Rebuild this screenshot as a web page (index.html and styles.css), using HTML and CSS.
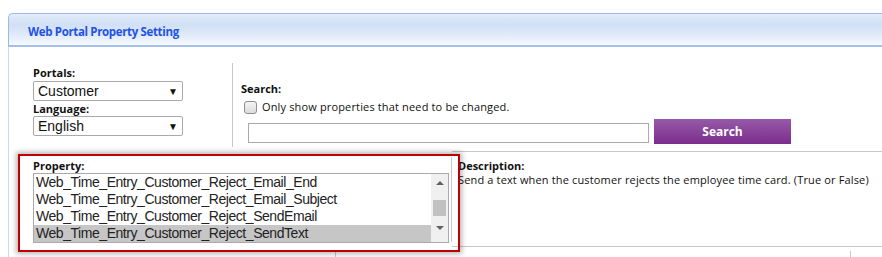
FILE: index.html
```html
<!DOCTYPE html>
<html>
<head>
<meta charset="utf-8">
<link rel="stylesheet" href="styles.css">
</head>
<body>
<div class="panel">
  <div class="panel-head">Web Portal Property Setting</div>
  <div class="panel-body">
    <div class="row-top">
      <div class="cell-portal">
        <div class="lbl">Portals:</div>
        <div class="dropdown"><span>Customer</span><span class="caret">&#9660;</span></div>
        <div class="lbl">Language:</div>
        <div class="dropdown"><span>English</span><span class="caret">&#9660;</span></div>
      </div>
      <div class="cell-search">
        <div class="lbl search-lbl">Search:</div>
        <label class="chk-row"><span class="chk"></span><span>Only show properties that need to be changed.</span></label>
        <div class="search-line">
          <div class="search-input"></div>
          <div class="search-btn">Search</div>
        </div>
      </div>
    </div>
    <div class="row-mid">
      <div class="cell-prop">
        <div class="prop-inner">
          <div class="lbl">Property:</div>
          <div class="listbox">
            <div class="items">
              <div class="item">Web_Time_Entry_Customer_Reject_Email_End</div>
              <div class="item">Web_Time_Entry_Customer_Reject_Email_Subject</div>
              <div class="item">Web_Time_Entry_Customer_Reject_SendEmail</div>
              <div class="item selected">Web_Time_Entry_Customer_Reject_SendText</div>
            </div>
            <div class="scrollbar">
              <span class="arrow up"></span>
              <span class="thumb"></span>
              <span class="arrow down"></span>
            </div>
          </div>
        </div>
      </div>
      <div class="cell-desc">
        <div class="lbl">Description:</div>
        <div class="desc-text">Send a text when the customer rejects the employee time card. (True or False)</div>
      </div>
    </div>
    <div class="row-bottom">
      <div class="b1"></div>
      <div class="b2"></div>
      <div class="b3"></div>
    </div>
    <div class="highlight"></div>
  </div>
</div>
</body>
</html>
```

FILE: styles.css
```css
html, body {
  margin: 0;
  padding: 0;
  background: #fff;
  overflow: hidden;
}
body {
  width: 882px;
  height: 257px;
  font-family: "Open Sans", "Noto Sans", sans-serif;
  color: #000;
}
.panel {
  margin: 13px 0 0 8px;
  width: 900px;
}
.panel-head {
  height: 27px;
  padding-top: 4px;
  border: 1px solid #9bb9e4;
  border-bottom: 2px solid #a3c0e8;
  border-right: none;
  border-radius: 5px 0 0 0;
  background: linear-gradient(#e8eff9 0, #dbe6f7 12%, #d1e0f6 35%, #e1ebf9 70%, #f7fafe 100%);
  padding-left: 19px;
  font-size: 11.5px;
  font-weight: 700;
  letter-spacing: -0.35px;
  color: #1f52e6;
  line-height: 27px;
}
.panel-body {
  position: relative;
  border-left: 1px solid #c6daf4;
  height: 220px;
}
.lbl {
  font-size: 11px;
  font-weight: 700;
  line-height: 14px;
  color: #111;
}
.row-top {
  display: flex;
  height: 104px;
}
.cell-portal {
  width: 199px;
  padding: 19px 0 0 24px;
  flex: none;
}
.cell-portal .lbl + .dropdown {
  margin-top: 1px;
}
.dropdown + .lbl {
  margin-top: 1px;
}
.dropdown + .lbl + .dropdown {
  margin-top: 0;
}
.dropdown {
  height: 18px;
  border: 1px solid #a9a9a9;
  border-radius: 2px;
  display: flex;
  align-items: center;
  justify-content: space-between;
  padding: 0 0 0 4px;
  font-family: "Liberation Sans", Arial, sans-serif;
  font-size: 14px;
  color: #111;
  box-sizing: content-box;
  width: 144px;
}
.caret {
  font-size: 10px;
  margin-right: 4px;
  color: #111;
}
.cell-search {
  margin-top: 16px;
  height: 84px;
  border-left: 1px solid #c8c8c8;
  padding-left: 8px;
  flex: 1;
}
.search-lbl {
  margin-top: 19px;
}
.chk-row {
  display: flex;
  align-items: center;
  margin: 3px 0 0 3px;
  font-size: 11px;
  letter-spacing: 0.15px;
  line-height: 16px;
  color: #111;
}
.chk {
  width: 11px;
  height: 11px;
  border: 1px solid #8f8f8f;
  border-radius: 3px;
  background: linear-gradient(#f4f4f4, #dcdcdc);
  margin-right: 5px;
  flex: none;
}
.search-line {
  display: flex;
  align-items: center;
  margin: 4px 0 0 7px;
}
.search-input {
  width: 399px;
  height: 18px;
  border: 1px solid #aaa;
  margin-top: 3px;
}
.search-btn {
  width: 137px;
  height: 25px;
  margin-left: 5px;
  background: linear-gradient(#955aa6, #7c2c8e);
  color: #fff;
  font-weight: 700;
  font-size: 12px;
  line-height: 25px;
  text-align: center;
}
.row-mid {
  display: flex;
  margin-top: 0;
  height: 96px;
}
.cell-prop {
  width: 443px;
  flex: none;
}
.prop-inner {
  margin: 6px 0 0 0;
  height: 85px;
  border-right: 1px solid #c8c8c8;
  padding: 2px 0 0 24px;
  box-sizing: border-box;
}
.listbox {
  display: flex;
  width: 414px;
  height: 68px;
  border: 1px solid #aaa;
  margin-top: 0;
}
.items {
  flex: 1;
  font-family: "Liberation Sans", Arial, sans-serif;
  font-size: 14px;
  letter-spacing: -0.45px;
  line-height: 17px;
  color: #222;
}
.item {
  padding-left: 2px;
  white-space: nowrap;
  height: 17px;
}
.item.selected {
  background: #c6c6c6;
}
.scrollbar {
  width: 17px;
  background: #f0f0f0;
  position: relative;
  display: flex;
  flex-direction: column;
  align-items: center;
}
.arrow {
  width: 0;
  height: 0;
  border-left: 4px solid transparent;
  border-right: 4px solid transparent;
}
.arrow.up {
  border-bottom: 4px solid #606060;
  margin-top: 7px;
}
.arrow.down {
  border-top: 4px solid #606060;
  margin-top: 10px;
}
.thumb {
  width: 13px;
  height: 16px;
  background: #c1c1c1;
  margin-top: 15px;
}
.cell-desc {
  flex: 1;
  border-top: 1px solid #c8c8c8;
  border-bottom: 1px solid #c8c8c8;
  padding: 7px 0 0 6px;
}
.desc-text {
  font-size: 11px;
  letter-spacing: 0.15px;
  line-height: 14px;
  color: #111;
}
.row-bottom {
  display: flex;
  margin-top: 4px;
  height: 10px;
}
.b1 { width: 326px; }
.b2 { width: 514px; border-left: 1px solid #c8c8c8; }
.b3 { flex: 1; border-left: 1px solid #c8c8c8; }
.highlight {
  position: absolute;
  left: 9px;
  top: 107px;
  width: 442px;
  height: 98px;
  box-sizing: border-box;
  border: 2px solid #c00000;
  box-shadow: 0 0 5px 2px rgba(0,0,0,0.28);
  pointer-events: none;
}
```
